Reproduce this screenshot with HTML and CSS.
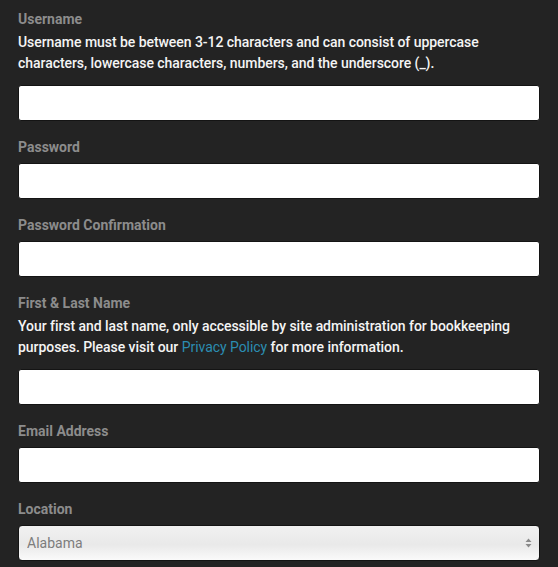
FILE: index.html
```html
<!DOCTYPE html>
<html lang="en">
<head>
<meta charset="utf-8">
<title>Register</title>
<link rel="stylesheet" href="styles.css">
</head>
<body>
<form class="form">
  <div class="field">
    <label class="label" for="u">Username</label>
    <p class="help">Username must be between 3-12 characters and can consist of uppercase characters, lowercase characters, numbers, and the underscore (_).</p>
    <input class="input" id="u" type="text">
  </div>
  <div class="field">
    <label class="label" for="p">Password</label>
    <input class="input" id="p" type="password">
  </div>
  <div class="field">
    <label class="label" for="pc">Password Confirmation</label>
    <input class="input" id="pc" type="password">
  </div>
  <div class="field">
    <label class="label" for="n">First &amp; Last Name</label>
    <p class="help">Your first and last name, only accessible by site administration for bookkeeping purposes. Please visit our <a class="link" href="#">Privacy Policy</a> for more information.</p>
    <input class="input" id="n" type="text">
  </div>
  <div class="field">
    <label class="label" for="e">Email Address</label>
    <input class="input" id="e" type="email">
  </div>
  <div class="field">
    <label class="label" for="l">Location</label>
    <div class="select-wrap">
      <select class="select" id="l">
        <option>Alabama</option>
      </select>
      <svg class="arrows" width="7" height="10" viewBox="0 0 7 10"><path d="M3.5 0.5 L6.5 4 H0.5 Z M3.5 9.5 L6.5 6 H0.5 Z" fill="#8a8a8a"/></svg>
    </div>
  </div>
</form>
</body>
</html>
```
FILE: styles.css
```css
html, body {
  margin: 0;
  padding: 0;
  background: #232323;
}
body {
  font-family: Roboto, "Liberation Sans", sans-serif;
}
.form {
  padding: 9px 18px 0;
}
.field {
  display: flex;
  flex-direction: column;
  margin-bottom: 16px;
}
.label {
  font-size: 14px;
  font-weight: 700;
  line-height: 20px;
  color: #8c8c8c;
  margin-bottom: 3px;
}
.help {
  margin: 0 0 11px;
  font-size: 14px;
  line-height: 21px;
  color: #f4f4f4;
  font-weight: 500;
  letter-spacing: -0.05px;
}
.label + .input,
.label + .select-wrap {
  margin-top: 3px;
}
.link {
  color: #2b8db2;
  text-decoration: none;
  font-weight: 400;
}
.input {
  box-sizing: border-box;
  height: 36px;
  width: 100%;
  margin: 0;
  border: 1px solid #141414;
  border-radius: 3px;
  background: #fff;
  outline: none;
}
.select-wrap {
  position: relative;
}
.select {
  box-sizing: border-box;
  display: block;
  width: 100%;
  height: 36px;
  margin: 0;
  padding: 0 8px;
  appearance: none;
  -webkit-appearance: none;
  border: 1px solid #141414;
  border-radius: 4px;
  background: linear-gradient(#f1f1f1, #e9e9e9 55%, #fafafa);
  font-family: Roboto, "Liberation Sans", sans-serif;
  font-size: 14px;
  color: #7d7d7d;
}
.arrows {
  position: absolute;
  right: 8px;
  top: 13px;
}
```
